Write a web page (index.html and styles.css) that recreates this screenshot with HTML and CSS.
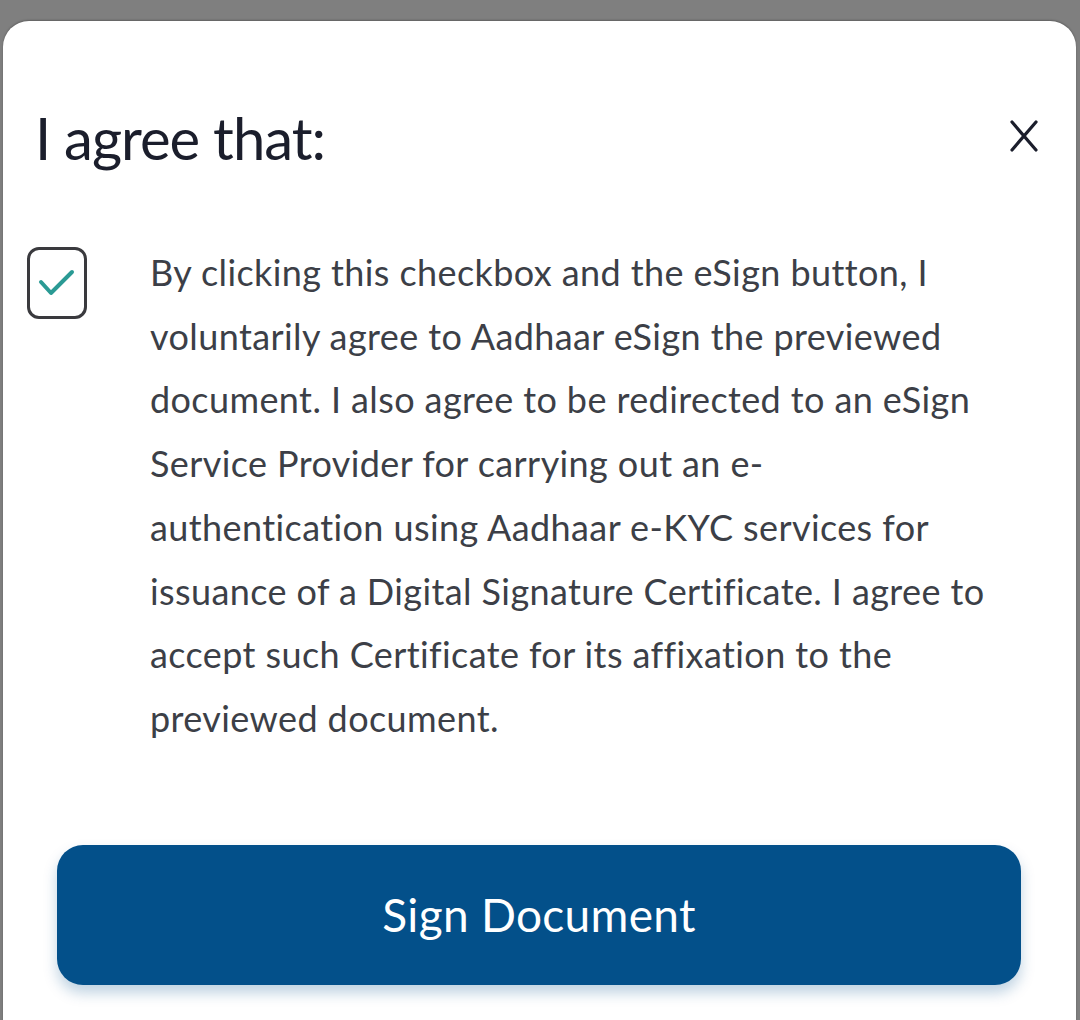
FILE: index.html
```html
<!DOCTYPE html>
<html lang="en">
<head>
<meta charset="utf-8">
<title>I agree that</title>
<link rel="stylesheet" href="styles.css">
</head>
<body>
<div class="modal">
  <div class="modal-header">
    <h1 class="title">I agree that:</h1>
    <button class="close" aria-label="Close">
      <svg width="28" height="32" viewBox="0 0 28 32"><path d="M2 2 L26 30 M26 2 L2 30" stroke="#1b1e2c" stroke-width="3.2" stroke-linecap="round" fill="none"/></svg>
    </button>
  </div>
  <div class="consent">
    <span class="checkbox">
      <svg width="40" height="32" viewBox="0 0 40 32"><path d="M4 15 L14 26 L35 5" stroke="#2a9a94" stroke-width="4" stroke-linecap="round" stroke-linejoin="round" fill="none"/></svg>
    </span>
    <p class="text">By clicking this checkbox and the eSign button, I<br>voluntarily agree to Aadhaar eSign the previewed<br>document. I also agree to be redirected to an eSign<br>Service Provider for carrying out an e-<br>authentication using Aadhaar e-KYC services for<br>issuance of a Digital Signature Certificate. I agree to<br>accept such Certificate for its affixation to the<br>previewed document.</p>
  </div>
  <div class="actions">
    <button class="sign">Sign Document</button>
  </div>
</div>
</body>
</html>
```
FILE: styles.css
```css
html, body {
  margin: 0;
  padding: 0;
  background: #7f7f7f;
  height: 1020px;
  overflow: hidden;
}
body {
  font-family: Lato, "Noto Sans", sans-serif;
  padding: 21px 4px 0 3px;
  box-sizing: border-box;
}
.modal {
  background: #ffffff;
  border-radius: 26px 26px 0 0;
  height: 1010px;
  box-shadow: 0 -1px 2px rgba(0,0,0,0.25);
}
.modal-header {
  display: flex;
  justify-content: space-between;
  align-items: center;
  padding: 81px 38px 0 32px;
}
.title {
  margin: 0;
  font-size: 58px;
  font-weight: 400;
  line-height: 72px;
  color: #1b1e2c;
  letter-spacing: -1px;
}
.close {
  border: 0;
  background: none;
  padding: 0;
  display: flex;
  margin-top: -4px;
}
.consent {
  display: flex;
  align-items: flex-start;
  padding: 67px 0 0 24px;
}
.checkbox {
  flex: none;
  width: 54px;
  height: 66px;
  border: 3px solid #3a3a3e;
  border-radius: 12px;
  display: flex;
  align-items: center;
  justify-content: center;
  margin-top: 6px;
}
.text {
  margin: 0 0 0 63px;
  font-size: 36px;
  line-height: 63.7px;
  color: #3c3f47;
  letter-spacing: 0.4px;
}
.actions {
  padding: 94px 55px 0 54px;
}
.sign {
  width: 100%;
  height: 140px;
  border: 0;
  border-radius: 26px;
  background: #03508a;
  color: #ffffff;
  font-family: Lato, "Noto Sans", sans-serif;
  font-size: 46px;
  letter-spacing: 0.3px;
  box-shadow: 0 8px 14px rgba(3, 80, 138, 0.25);
}
```
